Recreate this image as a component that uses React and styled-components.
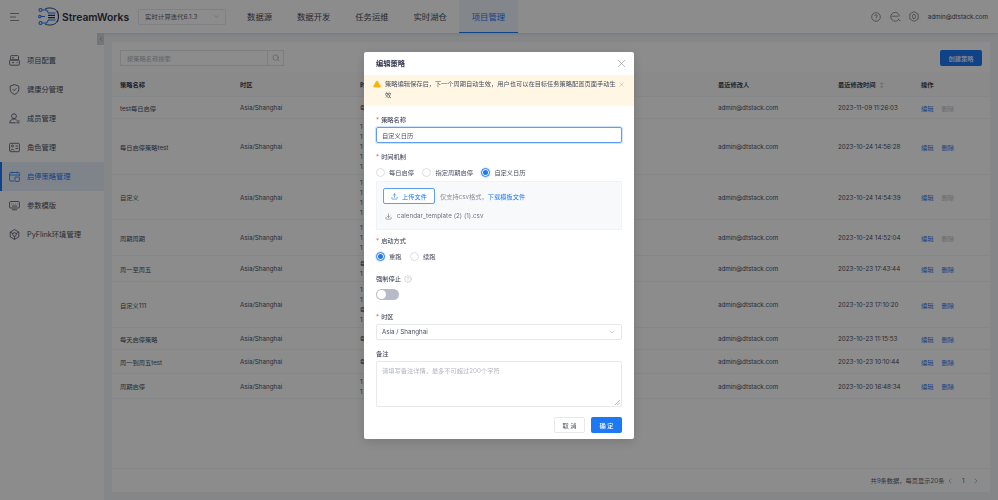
import React from 'react'
import styled, { createGlobalStyle } from 'styled-components'
import { X, Upload, Download, ChevronDown, ChevronLeft, ChevronRight, Search, HelpCircle, TriangleAlert } from 'lucide-react'

const FONT = `Inter, "Noto Sans CJK SC", sans-serif`

const GlobalStyle = createGlobalStyle`
  html, body {
    margin: 0;
    padding: 0;
    height: 500px;
    overflow: hidden;
    font-family: ${FONT};
    color: #3a3f4f;
    background: #f0f5f6;
  }
  * { box-sizing: border-box; }
`

const Page = styled.div`
  width: 998px;
  height: 500px;
  display: flex;
  flex-direction: column;
`

const TopBar = styled.header`
  height: 33px;
  flex: none;
  background: #fff;
  display: flex;
  align-items: center;
  padding-left: 10px;
  box-shadow: 0 1px 3px rgba(20, 60, 70, 0.12);
  position: relative;
`

const LogoLink = styled.a`
  margin-left: 18px;
  display: flex;
  align-items: center;
`

const LogoText = styled.span`
  font-size: 10.3px;
  font-weight: 600;
  color: #30354a;
  margin-left: 3px;
`

const VersionSelect = styled.div`
  width: 88px;
  height: 16px;
  margin-left: 9px;
  padding: 0 5px 0 6px;
  border: 1px solid #e8eaee;
  border-radius: 1px;
  display: flex;
  align-items: center;
  justify-content: space-between;
  font-size: 6.24px;
  letter-spacing: 0.2px;
  color: #555a6a;
`

const Nav = styled.nav`
  display: flex;
  height: 33px;
  margin-left: 8.5px;
`

const NavItem = styled.a`
  padding: 0 12.5px;
  display: flex;
  align-items: center;
  justify-content: center;
  font-size: 8.32px;
  color: ${p => (p.$active ? '#1d78f4' : '#444a5c')};
  background: ${p => (p.$active ? '#eef4fd' : 'transparent')};
  border-bottom: 1.5px solid ${p => (p.$active ? '#1d78f4' : 'transparent')};
`

const TopRight = styled.div`
  margin-left: auto;
  padding-right: 10px;
  display: flex;
  align-items: center;
  gap: 8.5px;
  font-size: 6.24px;
  color: #444a5c;
  svg { color: #6b7080; }
`

const Body = styled.div`
  flex: 1;
  display: flex;
  min-height: 0;
`

const Sidebar = styled.aside`
  width: 104px;
  flex: none;
  background: #fff;
  padding-top: 12.5px;
  position: relative;
`

const CollapseHandle = styled.div`
  position: absolute;
  top: 0;
  right: 0;
  width: 7px;
  height: 12px;
  background: #d4d8de;
  display: flex;
  align-items: center;
  justify-content: center;
  color: #6a6f7c;
`

const SideItem = styled.div`
  height: 29px;
  display: flex;
  align-items: center;
  gap: 7px;
  padding-left: 7px;
  font-size: 7.28px;
  color: ${p => (p.$active ? '#1d78f4' : '#4a4f60')};
  background: ${p => (p.$active ? '#e8f1fd' : 'transparent')};
  border-left: 2px solid ${p => (p.$active ? '#1d78f4' : 'transparent')};
  svg { flex: none; }
`

const Content = styled.main`
  flex: 1;
  padding: 9px 8px 8px 8px;
  min-width: 0;
`

const Card = styled.section`
  height: 100%;
  background: #fff;
  display: flex;
  flex-direction: column;
`

const Toolbar = styled.div`
  height: 30px;
  flex: none;
  padding: 8px 8px 0 8px;
  display: flex;
  justify-content: space-between;
  align-items: flex-start;
`

const SearchBox = styled.div`
  width: 164px;
  height: 16px;
  border: 1px solid #e3e5ea;
  display: flex;
  align-items: center;
  font-size: 6.24px;
  color: #b3b6c0;
`

const SearchText = styled.span`
  flex: 1;
  padding-left: 6px;
`

const SearchButton = styled.span`
  width: 16px;
  height: 100%;
  border-left: 1px solid #e3e5ea;
  display: flex;
  align-items: center;
  justify-content: center;
  color: #a8abb5;
`

const PrimaryButton = styled.button`
  width: ${p => p.$width}px;
  height: 16px;
  border: none;
  border-radius: 2px;
  padding: 0;
  background: #1d78f4;
  color: #fff;
  font: 500 6.24px ${FONT};
`

const Row = styled.div`
  height: ${p => p.$height}px;
  flex: none;
  display: grid;
  grid-template-columns: 120px 120px 358px 120px 83px 1fr;
  align-items: center;
  padding: ${p => (p.$head ? 0 : 1)}px 0 0 8px;
  border-bottom: 1px solid #f3f4f6;
  font-size: 6.24px;
  font-weight: ${p => (p.$head ? 600 : 400)};
  color: ${p => (p.$head ? '#3a3f4f' : '#4a4f60')};
  background: ${p => (p.$head ? '#fbfbfc' : 'transparent')};
`

const ScheduleCell = styled.div`
  line-height: 10px;
  white-space: pre-line;
  overflow: hidden;
`

const ActionCell = styled.div`
  display: flex;
  gap: 8px;
`

const ActionLink = styled.a`
  color: ${p => (p.$disabled ? '#bfc2ca' : '#1d78f4')};
`

const SortMark = styled.span`
  margin-left: 4px;
  font-size: 5px;
  color: #b5b8c2;
`

const TableSpacer = styled.div`
  flex: 1;
`

const Footer = styled.div`
  height: 24px;
  flex: none;
  border-top: 1px solid #f3f4f6;
  display: flex;
  align-items: center;
  justify-content: flex-end;
  gap: 2px;
  padding-right: 10px;
  font-size: 6.24px;
  color: #5a5f70;
`

const CountLink = styled.span`
  color: #1d78f4;
`

const Pager = styled.div`
  display: flex;
  align-items: center;
  gap: 7.5px;
  svg { color: #9a9eaa; }
`

const Mask = styled.div`
  position: fixed;
  inset: 0;
  background: rgba(0, 0, 0, 0.45);
`

const Modal = styled.div`
  position: absolute;
  left: 364px;
  top: 52px;
  width: 270px;
  height: 387px;
  background: #fff;
  border-radius: 2px;
  box-shadow: 0 3px 12px rgba(0, 0, 0, 0.15);
  display: flex;
  flex-direction: column;
`

const ModalHead = styled.div`
  height: 23px;
  flex: none;
  padding: 0 6px 1px 12px;
  display: flex;
  align-items: center;
  justify-content: space-between;
  font-size: 7.28px;
  font-weight: 600;
  color: #30354a;
  svg { color: #7d8290; }
`

const Alert = styled.div`
  height: 31px;
  flex: none;
  background: #fff6e3;
  padding: 4px 9px 0 9px;
  display: flex;
  gap: 4px;
  font-size: 6.24px;
  line-height: 11px;
  color: #4a4f60;
`

const AlertIcon = styled(TriangleAlert)`
  flex: none;
  margin-top: 1px;
  color: #fbb310;
  fill: #fbb310;
  stroke: #fbb310;
`

const AlertClose = styled(X)`
  flex: none;
  margin: 2px 0 0 -3px;
  color: #b5b8c2;
`

const Form = styled.div`
  flex: 1;
  padding: 8px 12px 0 12px;
  display: flex;
  flex-direction: column;
`

const Label = styled.div`
  height: 11px;
  margin-top: ${p => p.$top || 0}px;
  display: flex;
  align-items: center;
  gap: 3px;
  font-size: 6.24px;
  color: #30354a;
  svg { color: #a5a8b2; }
`

const Required = styled.span`
  color: #f0562e;
  margin-right: -1px;
`

const Field = styled.div`
  height: 16px;
  margin-top: ${p => p.$top || 0}px;
  padding: 0 5px;
  border: 1px solid ${p => (p.$focus ? '#5c9df7' : '#e6e8ec')};
  border-radius: 2px;
  box-shadow: ${p => (p.$focus ? '0 0 0 1px rgba(29, 120, 244, 0.2)' : 'none')};
  display: flex;
  align-items: center;
  justify-content: space-between;
  font-size: 6.24px;
  color: #4a4f60;
  svg { color: #b5b8c2; }
`

const RadioRow = styled.div`
  height: 10px;
  margin-top: ${p => p.$top || 0}px;
  display: flex;
  align-items: center;
  gap: 8.5px;
`

const RadioOption = styled.label`
  display: flex;
  align-items: center;
  gap: 4px;
  font-size: 6.24px;
  color: #4a4f60;
`

const RadioDot = styled.span`
  width: 9px;
  height: 9px;
  border-radius: 50%;
  border: 1px solid ${p => (p.$on ? '#1d78f4' : '#dcdee3')};
  box-shadow: ${p => (p.$on ? '0 0 0 1px rgba(29, 120, 244, 0.15)' : 'none')};
  display: flex;
  align-items: center;
  justify-content: center;
  &::after {
    content: '';
    width: 5px;
    height: 5px;
    border-radius: 50%;
    background: ${p => (p.$on ? '#1d78f4' : 'transparent')};
  }
`

const UploadPanel = styled.div`
  height: 49px;
  margin-top: 4px;
  padding: 6px 6px 0;
  background: #f8f9fb;
  border: 1px solid #f1f2f5;
`

const UploadRow = styled.div`
  display: flex;
  align-items: center;
  gap: 5px;
  font-size: 6.24px;
  color: #858a98;
`

const UploadButton = styled.button`
  width: 52px;
  height: 16px;
  padding: 0;
  background: #fff;
  border: 1px solid #5c9df7;
  border-radius: 2px;
  display: flex;
  align-items: center;
  justify-content: center;
  gap: 4px;
  color: #1d78f4;
  font: 400 6.24px ${FONT};
`

const TemplateLink = styled.a`
  color: #1d78f4;
`

const FileRow = styled.div`
  margin-top: 8px;
  padding-left: 2px;
  display: flex;
  align-items: center;
  gap: 5px;
  font-size: 6.24px;
  letter-spacing: 0.05px;
  color: #6b7080;
`

const Switch = styled.span`
  width: 23px;
  height: 11px;
  margin-top: 5px;
  border-radius: 6px;
  background: #b9bac9;
  padding: 1px;
  display: block;
  &::before {
    content: '';
    display: block;
    width: 9px;
    height: 9px;
    border-radius: 50%;
    background: #fff;
  }
`

const TextArea = styled.div`
  height: 46px;
  margin-top: 2px;
  padding: 4px 5px;
  border: 1px solid #e6e8ec;
  border-radius: 2px;
  font-size: 6.24px;
  color: #b3b6c0;
  position: relative;
`

const ResizeGrip = styled.svg`
  position: absolute;
  right: 1px;
  bottom: 1px;
`

const ModalFoot = styled.div`
  display: flex;
  justify-content: flex-end;
  gap: 6px;
  margin-top: 10px;
`

const CancelButton = styled.button`
  width: 31px;
  height: 16px;
  padding: 0;
  background: #fff;
  border: 1px solid #e6e8ec;
  border-radius: 2px;
  color: #4a4f60;
  font: 400 6.24px ${FONT};
`

const Logo = () => (
  <svg width="21" height="19" viewBox="0 0 21 19" fill="none" stroke="#1d78f4" strokeWidth="1.1">
    <circle cx="2.5" cy="3" r="1.5" />
    <circle cx="2.5" cy="16" r="1.5" />
    <circle cx="1.8" cy="9.5" r="1.2" />
    <path d="M4 3h4.5l2 3h7M4 16h4.5l2-3h7M3 9.5h4" />
    <path d="M18.5 3.5c1.6 1.5 2 4 2 6s-.4 4.500-2 6" stroke="#17376f" />
    <path d="M10 8.300h7M10 10.700h7" stroke="#17376f" strokeWidth="1.3" />
    <path d="M7 2c3-1.500 8-1.500 11 1M7 17c3 1.500 8 1.500 11-1" stroke="#17376f" strokeWidth=".9" />
  </svg>
)

const MenuGlyph = () => (
  <svg width="10" height="8" viewBox="0 0 10 8" fill="none" stroke="#8a8e9a" strokeWidth="1">
    <path d="M0 .5h9M0 4h6M0 7.500h9" />
  </svg>
)

const HelpGlyph = () => (
  <svg width="10" height="10" viewBox="0 0 10 10" fill="none" stroke="currentColor" strokeWidth=".7">
    <circle cx="5" cy="5" r="4.300" />
    <path d="M3.800 3.900c0-1.600 2.500-1.600 2.500 0 0 1-1.300 1-1.300 2.100M5 7v.6" />
  </svg>
)

const ChatGlyph = () => (
  <svg width="11" height="11" viewBox="0 0 11 11" fill="none" stroke="currentColor" strokeWidth=".7">
    <path d="M8.800 8.200A4.400 4.400 0 1 1 9.500 5.400" />
    <path d="M1.500 5.200h7M8 7.800c.5.800 1.300 1.700 2.500 2" />
  </svg>
)

const GearGlyph = () => (
  <svg width="10" height="11" viewBox="0 0 10 11" fill="none" stroke="currentColor" strokeWidth=".7">
    <path d="M5 .6l4.200 2.400v5L5 10.400.8 8V3z" strokeLinejoin="round" />
    <ellipse cx="5" cy="5.500" rx="1.500" ry="2.300" />
  </svg>
)

const ProjectIcon = () => (
  <svg width="11" height="11" viewBox="0 0 11 11" fill="none" stroke="currentColor" strokeWidth=".8">
    <rect x="1.500" y=".6" width="8" height="4.400" rx="1" />
    <rect x=".6" y="5" width="9.800" height="5.200" rx="1" />
    <path d="M3 2.800h2M3 7.600h2M7.500 7.600h1" />
  </svg>
)

const HealthIcon = () => (
  <svg width="11" height="11" viewBox="0 0 11 11" fill="none" stroke="currentColor" strokeWidth=".8">
    <path d="M5.500.6l4.300 1.500v3.200c0 2.700-2 4.200-4.300 5.100C3.200 9.500 1.200 8 1.200 5.300V2.100z" />
    <path d="M3.700 5.200l1.400 1.400 2.300-2.300" />
  </svg>
)

const MemberIcon = () => (
  <svg width="11" height="11" viewBox="0 0 11 11" fill="none" stroke="currentColor" strokeWidth=".8">
    <circle cx="5" cy="3.200" r="2.400" />
    <path d="M.7 9.800c.3-2.400 2-3.800 4.300-3.800 1 0 1.800.2 2.500.7M.7 9.800h6M7.500 8h3M7.500 9.800h3" />
  </svg>
)

const RoleIcon = () => (
  <svg width="11" height="11" viewBox="0 0 11 11" fill="none" stroke="currentColor" strokeWidth=".8">
    <rect x=".6" y="1.300" width="9.800" height="8.400" rx="1" />
    <circle cx="3.500" cy="4" r="1" />
    <path d="M1.500 8.500c.6-1.400 3-1.400 3.800 0M6.500 4h2.500M6.500 6.500h2.500" />
  </svg>
)

const CalendarIcon = () => (
  <svg width="11" height="11" viewBox="0 0 11 11" fill="none" stroke="currentColor" strokeWidth=".8">
    <path d="M5 10H1.500a.9.900 0 0 1-.9-.9V2.400a.9.900 0 0 1 .9-.9h8a.9.900 0 0 1 .9.9V5M.6 4h9.800M3 .6v1.800M8 .6v1.800" />
    <rect x="6" y="6" width="4.400" height="4.400" rx=".5" />
  </svg>
)

const TemplateIcon = () => (
  <svg width="11" height="11" viewBox="0 0 11 11" fill="none" stroke="currentColor" strokeWidth=".8">
    <rect x=".6" y="1.500" width="9.800" height="6.500" rx="1" />
    <path d="M2.500 4h.5M4.500 4h.5M6.500 4h.5M8 4h.5M3 6h5M3 9.800h5" />
  </svg>
)

const EnvIcon = () => (
  <svg width="11" height="11" viewBox="0 0 11 11" fill="none" stroke="currentColor" strokeWidth=".8">
    <path d="M5.500.6l4.300 2.500v4.800l-4.300 2.500-4.300-2.500V3.100z" strokeLinejoin="round" />
    <circle cx="5.500" cy="5.500" r="1.800" />
    <path d="M1.200 3.100l2.700 1.500M9.800 3.100L7.100 4.600M5.500 10.400V7.300" />
  </svg>
)

const SIDE_ITEMS = [
  { label: '项目配置', Icon: ProjectIcon },
  { label: '健康分管理', Icon: HealthIcon },
  { label: '成员管理', Icon: MemberIcon },
  { label: '角色管理', Icon: RoleIcon },
  { label: '启停策略管理', Icon: CalendarIcon, active: true },
  { label: '参数模版', Icon: TemplateIcon },
  { label: 'PyFlink环境管理', Icon: EnvIcon },
]

const NAV_ITEMS = ['数据源', '数据开发', '任务运维', '实时湖仓', '项目管理']

const ROWS = [
  { name: 'test每日启停', h: 22, sched: '每天 08:00', time: '2023-11-09 11:26:03', del: false },
  { name: '每日启停策略test', h: 56, sched: '1\n1\n1\n1\n1', time: '2023-10-24 14:56:28', del: true },
  { name: '自定义', h: 45, sched: '1\n1\n1\n1', time: '2023-10-24 14:54:39', del: false },
  { name: '周期周期', h: 36, sched: '1\n1\n1', time: '2023-10-24 14:52:04', del: false },
  { name: '周一至周五', h: 26, sched: '每\n1', time: '2023-10-23 17:43:44', del: true },
  { name: '自定义111', h: 46, sched: '1\n1\n每\n1', time: '2023-10-23 17:10:20', del: true },
  { name: '每天启停策略', h: 22, sched: '每', time: '2023-10-23 11:15:53', del: true },
  { name: '周一到周五test', h: 24, sched: '每', time: '2023-10-23 10:10:44', del: true },
  { name: '周期启停', h: 25, sched: '1\n1', time: '2023-10-20 16:48:34', del: true },
]

export default function App() {
  return (
    <Page>
      <GlobalStyle />
      <TopBar>
        <MenuGlyph />
        <LogoLink>
          <Logo />
          <LogoText>StreamWorks</LogoText>
        </LogoLink>
        <VersionSelect>
          实时计算迭代6.1.3
          <ChevronDown size={7} color="#b5b8c2" />
        </VersionSelect>
        <Nav>
          {NAV_ITEMS.map((item, i) => (
            <NavItem key={item} $active={i === 4}>{item}</NavItem>
          ))}
        </Nav>
        <TopRight>
          <HelpGlyph />
          <ChatGlyph />
          <GearGlyph />
          <span>admin@dtstack.com</span>
        </TopRight>
      </TopBar>
      <Body>
        <Sidebar>
          <CollapseHandle><ChevronLeft size={6} /></CollapseHandle>
          {SIDE_ITEMS.map(({ label, Icon, active }) => (
            <SideItem key={label} $active={active}>
              <Icon />
              {label}
            </SideItem>
          ))}
        </Sidebar>
        <Content>
          <Card>
            <Toolbar>
              <SearchBox>
                <SearchText>按策略名称搜索</SearchText>
                <SearchButton><Search size={8} /></SearchButton>
              </SearchBox>
              <PrimaryButton $width={42}>创建策略</PrimaryButton>
            </Toolbar>
            <Row $head $height={25}>
              <div>策略名称</div>
              <div>时区</div>
              <div>时间机制</div>
              <div>最近修改人</div>
              <div>最近修改时间<SortMark>↕</SortMark></div>
              <div>操作</div>
            </Row>
            {ROWS.map(row => (
              <Row key={row.name} $height={row.h}>
                <div>{row.name}</div>
                <div>Asia/Shanghai</div>
                <ScheduleCell>{row.sched}</ScheduleCell>
                <div>admin@dtstack.com</div>
                <div>{row.time}</div>
                <ActionCell>
                  <ActionLink>编辑</ActionLink>
                  <ActionLink $disabled={!row.del}>删除</ActionLink>
                </ActionCell>
              </Row>
            ))}
            <TableSpacer />
            <Footer>
              <span>共<CountLink>9</CountLink>条数据，每页显示20条</span>
              <Pager>
                <ChevronLeft size={8} />
                <span>1</span>
                <ChevronRight size={8} />
              </Pager>
            </Footer>
          </Card>
        </Content>
      </Body>
      <Mask>
        <Modal>
          <ModalHead>
            编辑策略
            <X size={13} strokeWidth={1} />
          </ModalHead>
          <Alert>
            <AlertIcon size={8} />
            <span>策略编辑保存后，下一个周期自动生效，用户也可以在目标任务策略配置页面手动生效</span>
            <AlertClose size={7} />
          </Alert>
          <Form>
            <Label><Required>*</Required>策略名称</Label>
            <Field $focus $top={2}>自定义日历</Field>
            <Label $top={8}><Required>*</Required>时间机制</Label>
            <RadioRow $top={5}>
              <RadioOption><RadioDot />每日启停</RadioOption>
              <RadioOption><RadioDot />指定周期启停</RadioOption>
              <RadioOption><RadioDot $on />自定义日历</RadioOption>
            </RadioRow>
            <UploadPanel>
              <UploadRow>
                <UploadButton><Upload size={7} />上传文件</UploadButton>
                <span>仅支持csv格式，<TemplateLink>下载模板文件</TemplateLink></span>
              </UploadRow>
              <FileRow><Download size={7} />calendar_template (2) (1).csv</FileRow>
            </UploadPanel>
            <Label $top={5}><Required>*</Required>启动方式</Label>
            <RadioRow $top={5}>
              <RadioOption><RadioDot $on />重跑</RadioOption>
              <RadioOption><RadioDot />续跑</RadioOption>
            </RadioRow>
            <Label $top={12}>强制停止<HelpCircle size={8} strokeWidth={1.3} /></Label>
            <Switch />
            <Label $top={11}><Required>*</Required>时区</Label>
            <Field $top={2}>Asia / Shanghai<ChevronDown size={8} /></Field>
            <Label $top={8}>备注</Label>
            <TextArea>
              请填写备注详情，最多不可超过200个字符
              <ResizeGrip width="5" height="5" viewBox="0 0 5 5" stroke="#8a8e9a" strokeWidth="0.6">
                <path d="M0 5L5 0M2.500 5L5 2.500" />
              </ResizeGrip>
            </TextArea>
            <ModalFoot>
              <CancelButton>取 消</CancelButton>
              <PrimaryButton $width={31}>确 定</PrimaryButton>
            </ModalFoot>
          </Form>
        </Modal>
      </Mask>
    </Page>
  )
}
